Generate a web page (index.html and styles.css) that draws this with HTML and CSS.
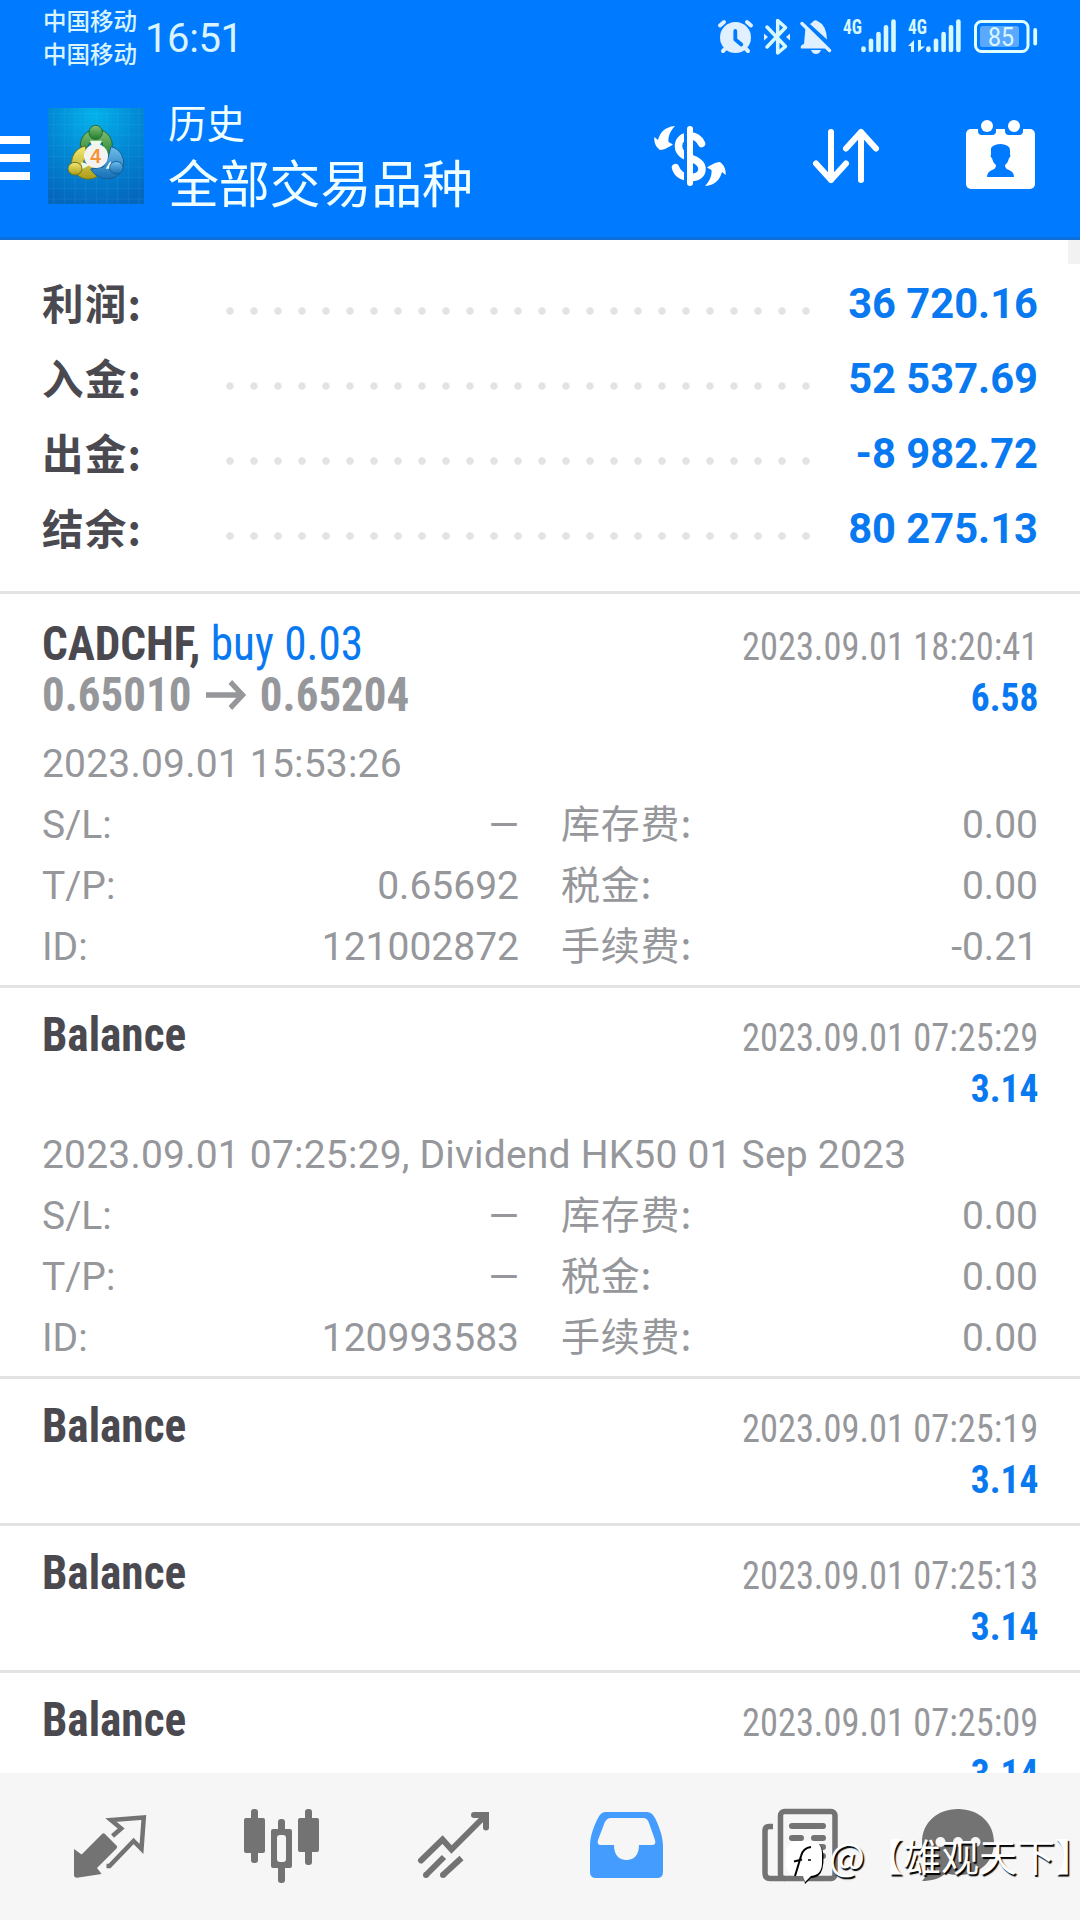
FILE: index.html
```html
<!DOCTYPE html>
<html lang="zh-CN">
<head>
<meta charset="utf-8">
<title>历史</title>
<link rel="stylesheet" href="styles.css">
</head>
<body>
<div class="screen">
  <header class="header">
    <div class="status">
      <div class="carriers"><span>中国移动</span><span>中国移动</span></div>
      <span class="clock">16:51</span>
      <svg class="status-icons" viewBox="710 0 330 72" width="330" height="72">
        <g fill="#e0f0ff" stroke="#e0f0ff" stroke-linecap="round" stroke-linejoin="round">
          <circle cx="735.5" cy="37.5" r="15.5" stroke="none"/>
          <path d="M720 25.5l4-3.5M747 22l4 3.500M723 51l2-2M748 51l-2-2" stroke-width="4" fill="none"/>
          <path d="M735.300 31v8.500l6 5" stroke="#007aff" stroke-width="3.800" fill="none"/>
          <path d="M767 27L785.500 46.500L777.700 53V20.500L785.500 27.500L767 47" stroke="#d8fafc" stroke-width="3.500" fill="none"/>
          <path d="M764 33.500l4 3.500l-4 3.500zM790 33.500l-4 3.500l4 3.500z" stroke="none"/>
          <path d="M805.500 27.500L826 48.500H801q-1.500-3 3-4.500zM810 24q2.500-1.500 3.500-3q2-1.500 4 0q9 4 9.500 18.500zM811 50h10q-1.500 4-5 4t-5-4z" stroke="none"/>
          <path d="M802 23.500L829.500 50.500" stroke-width="3.500"/>
        </g>
        <g stroke="#d8f8ff" stroke-width="4.600" stroke-linecap="round">
          <path d="M863.500 48.500v1.500M871 40.800V50M878.500 34V50M886 27.200V50M893.500 21.500V50"/>
          <path d="M928.400 48.500v1.500M936 40.800V50M943.600 34V50M951 27.200V50M958.400 21.500V50"/>
        </g>
        <g class="net"><text x="843" y="34" textLength="19" lengthAdjust="spacingAndGlyphs">4G</text><text x="908" y="34" textLength="19" lengthAdjust="spacingAndGlyphs">4G</text></g>
        <path d="M908 46L914 40V52H911V46zM918 40h3v6.500h4l-7 5.500z" fill="#d8f8ff"/>
        <rect x="975.500" y="21.500" width="52.500" height="30" rx="6" fill="none" stroke="#e0ffff" stroke-width="3"/>
        <rect x="980" y="26" width="39" height="21" rx="2.500" fill="#5ba8ff"/>
        <rect x="1033.300" y="28" width="3.800" height="17.500" rx="1.900" fill="#e0ffff"/>
        <text class="charge" x="988" y="46" textLength="26" lengthAdjust="spacingAndGlyphs">85</text>
      </svg>
    </div>
    <div class="toolbar">
      <div class="menu"><i></i><i></i><i></i></div>
      <svg class="logo" viewBox="24 24 288 288" width="96" height="96">
        <defs>
          <radialGradient id="sky" cx=".48" cy=".08" r=".95"><stop offset="0" stop-color="#04b2ea"/><stop offset=".5" stop-color="#0388d4"/><stop offset="1" stop-color="#0467bd"/></radialGradient>
          <linearGradient id="gr" x2="0" y2="1"><stop offset="0" stop-color="#86c078"/><stop offset="1" stop-color="#1e7f2a"/></linearGradient>
          <linearGradient id="ye" x2="0" y2="1"><stop offset="0" stop-color="#f4eb72"/><stop offset="1" stop-color="#ab9b18"/></linearGradient>
          <linearGradient id="bl" x2="0" y2="1"><stop offset="0" stop-color="#6fbdea"/><stop offset="1" stop-color="#146fb4"/></linearGradient>
        </defs>
        <path d="M24 24h288v288H24z" fill="url(#sky)"/>
        <path d="M41 24v288M73 24v288M105 24v288M137 24v288M169 24v288M201 24v288M233 24v288M265 24v288M297 24v288M24 41h288M24 73h288M24 105h288M24 137h288M24 169h288M24 201h288M24 233h288M24 265h288M24 297h288" stroke="#5cc4ff" stroke-opacity=".15" stroke-width="2.500"/>
        <g stroke-width="3">
          <path d="M121 140a48 48 0 1 1 86 25l-16 8l-4-44h-38l-8 14z" fill="url(#gr)" stroke="#1d6b39"/>
          <path d="M137 138a50 50 0 1 0 34 92l-18-40h-24l8-22z" fill="url(#ye)" stroke="#6f7420"/>
          <path d="M213 140a49 49 0 1 1-22 96q-26-6-39-29l38-6l14-28z" fill="url(#bl)" stroke="#175f9a"/>
          <path d="M150 122h36l-8 16h-22zM124 186l26 8l-24 14zM211 184l-14 22h22z" fill="#eefbe8"/>
          <ellipse cx="167" cy="97" rx="20" ry="21" fill="url(#gr)" stroke="#1d6b39"/>
          <ellipse cx="105" cy="206" rx="21" ry="19" fill="url(#ye)" stroke="#6f7420"/>
          <ellipse cx="229" cy="203" rx="20" ry="19" fill="url(#bl)" stroke="#175f9a"/>
        </g>
        <circle cx="168" cy="168" r="36" fill="#f4f3f1"/>
        <text class="four" x="167" y="190" text-anchor="middle">4</text>
      </svg>
      <div class="titles"><span class="title">历史</span><span class="subtitle">全部交易品种</span></div>
      <svg class="actions" viewBox="640 100 400 110" width="400" height="110" fill="none" stroke="#fff" stroke-linecap="round" stroke-linejoin="round">
        <path d="M701.500 143.500C699 138 695 136 690 136C683 136 678.500 140 678.500 146C678.500 153 684 156 690 158C698 160.500 702 164 702 169C702 175 697 177.500 690 177.500C682 177 677 173 675.500 167.500" stroke-width="7.500"/>
        <path d="M684 128h6v56h-6z" fill="#007aff" stroke="none"/>
        <path d="M690 129V183" stroke-width="6"/>
        <path id="swap" d="M675 126C664 127 660 133 658 140L654.300 137C654 143 656 147 660 150C664 150 669 147 673 144.500L668.500 142C668 137 670 131 675 126z" fill="#fff" stroke="none"/>
        <use href="#swap" transform="rotate(180 690 156)"/>
        <path d="M831 132V180M816 163.500L831 180L846 163.500M861 180V132M846 148.500L861 132L876 148.500" stroke-width="6"/>
        <g stroke="none"><rect x="966" y="129" width="69" height="60" rx="5" fill="#fff"/>
        <path d="M978 126h18v5q0 4-4 4h-10q-4 0-4-4zM1005 126h18v5q0 4-4 4h-10q-4 0-4-4z" fill="#007aff"/>
        <circle cx="987" cy="126" r="6" fill="#fff"/><circle cx="1014" cy="126" r="6" fill="#fff"/>
        <path d="M1001 144q9 1 9 6v4q1 3-1 4q-1 5-4 7q0 4 4 5q5 2 5 7h-27q0-5 5-7q4-1 4-5q-3-2-4-7q-2-1-1-4v-6q3-4 10-4z" fill="#007aff"/></g>
      </svg>
    </div>
  </header>

  <main class="content">
    <i class="thumb"></i>
    <section class="summary">
      <div class="sum"><span>利润:</span><i></i><b>36 720.16</b></div>
      <div class="sum"><span>入金:</span><i></i><b>52 537.69</b></div>
      <div class="sum"><span>出金:</span><i></i><b>-8 982.72</b></div>
      <div class="sum"><span>结余:</span><i></i><b>80 275.13</b></div>
    </section>

    <article class="deal first">
      <div class="line"><span class="symbol"><b>CADCHF,</b> <em>buy 0.03</em></span><span class="time">2023.09.01 18:20:41</span></div>
      <div class="line"><span class="price">0.65010<svg width="44" height="30" viewBox="0 0 44 30"><path d="M0 15H39M26 2L39 15L26 28" fill="none" stroke="#96979b" stroke-width="5.500"/></svg>0.65204</span><span class="profit">6.58</span></div>
      <div class="details">
        <p>2023.09.01 15:53:26</p>
        <div><span>S/L:</span><span>—</span></div><div><span class="cn">库存费:</span><span>0.00</span></div>
        <div><span>T/P:</span><span>0.65692</span></div><div><span class="cn">税金:</span><span>0.00</span></div>
        <div><span>ID:</span><span>121002872</span></div><div><span class="cn">手续费:</span><span>-0.21</span></div>
      </div>
    </article>

    <article class="deal">
      <div class="line"><span class="symbol"><b>Balance</b></span><span class="time">2023.09.01 07:25:29</span></div>
      <div class="line"><span class="price">&nbsp;</span><span class="profit">3.14</span></div>
      <div class="details">
        <p>2023.09.01 07:25:29, Dividend HK50 01 Sep 2023</p>
        <div><span>S/L:</span><span>—</span></div><div><span class="cn">库存费:</span><span>0.00</span></div>
        <div><span>T/P:</span><span>—</span></div><div><span class="cn">税金:</span><span>0.00</span></div>
        <div><span>ID:</span><span>120993583</span></div><div><span class="cn">手续费:</span><span>0.00</span></div>
      </div>
    </article>

    <article class="deal compact">
      <div class="line"><span class="symbol"><b>Balance</b></span><span class="time">2023.09.01 07:25:19</span></div>
      <div class="line"><span class="price">&nbsp;</span><span class="profit">3.14</span></div>
    </article>
    <article class="deal compact">
      <div class="line"><span class="symbol"><b>Balance</b></span><span class="time">2023.09.01 07:25:13</span></div>
      <div class="line"><span class="price">&nbsp;</span><span class="profit">3.14</span></div>
    </article>
    <article class="deal compact">
      <div class="line"><span class="symbol"><b>Balance</b></span><span class="time">2023.09.01 07:25:09</span></div>
      <div class="line"><span class="price">&nbsp;</span><span class="profit">3.14</span></div>
    </article>
  </main>

  <nav class="tabs">
    <svg viewBox="24 1773 172 147"><path d="M74 1849L81.600 1854.500L102 1834q1.500-1.500 3 0L116.500 1845.500q1.500 1.500 0 3L97 1868L101.600 1874L77 1877.800q-3 0-3-3z" fill="#737373"/><path d="M112.500 1836L121.200 1828.500L111 1820L143.800 1817.500L141.500 1849L133.600 1841L109.500 1866H106.500" fill="none" stroke="#737373" stroke-width="4.500"/></svg>
    <svg viewBox="196 1773 172 147"><g fill="#737373"><rect x="244" y="1818" width="21" height="35" rx="2"/><rect x="251" y="1809" width="7" height="54" rx="3"/><path fill-rule="evenodd" d="M273 1829h17q2 0 2 2v35q0 2-2 2h-17q-2 0-2-2v-35q0-2 2-2zM280 1835q-3 0-3 3v21q0 3 3 3h3q3 0 3-3v-21q0-3-3-3z"/><rect x="278" y="1819" width="7" height="13" rx="3"/><rect x="278" y="1865" width="7" height="18" rx="3"/><rect x="298" y="1818" width="21" height="34" rx="2"/><rect x="305" y="1809" width="7" height="56" rx="3"/></g></svg>
    <svg viewBox="368 1773 172 147"><path d="M421 1860.500L442.500 1839.500L451.500 1849.500L485 1816M474 1815H486V1827.500" fill="none" stroke="#737373" stroke-width="6" stroke-linecap="round"/><path d="M444 1857L426 1875M461.500 1858L443 1875" stroke="#737373" stroke-width="6"/><circle cx="426" cy="1875" r="3" fill="#737373"/><circle cx="443" cy="1875" r="3" fill="#737373"/></svg>
    <svg viewBox="540 1773 172 147"><path fill="#449cff" fill-rule="evenodd" d="M605 1812H647Q652 1812 655 1818C660 1828 663 1838 663 1846V1872Q663 1878 657 1878H596Q590 1878 590 1872V1846C590 1836 594 1826 598 1818Q601 1812 605 1812zM611 1818Q606.500 1818 604.500 1823L598 1840Q596.500 1845 601 1845H614C614 1855 619 1860 626.500 1860S639 1855 639 1845H652Q656.500 1845 655 1840L649 1823Q647.500 1818 643 1818z"/></svg>
    <svg viewBox="712 1773 172 147"><path d="M773 1826.500H769Q765 1826.500 765 1831V1873Q765 1878.500 770 1878.500H785" fill="none" stroke="#737373" stroke-width="5.500"/><rect x="780.500" y="1811.500" width="54.500" height="67" rx="4" fill="none" stroke="#737373" stroke-width="5.500"/><path d="M792 1826H823M792 1838H801M814 1838H823M792 1847H801M814 1847H823M792 1856H823" stroke="#737373" stroke-width="6" stroke-linecap="round"/></svg>
    <svg viewBox="884 1773 172 147"><path fill="#737373" d="M958 1809C979 1809 994 1823 994 1842C994 1862 980 1875 958 1875C953 1875 949 1874 946 1873C940 1879 931 1881 922 1881Q927 1876 929 1870C924 1863 922 1852 922 1842C922 1823 937 1809 958 1809z"/><g fill="#f6f6f6"><circle cx="940.500" cy="1842" r="5"/><circle cx="958" cy="1842" r="5"/><circle cx="975.500" cy="1842" r="5"/></g></svg>
  </nav>

  <div class="watermark">
    <svg viewBox="784 1836 45 48" width="45" height="48"><path d="M802 1843H813Q823 1843 823.500 1856Q824 1872 818 1876Q815 1878 811 1878L805 1884L804 1878Z" fill="#000"/><path d="M800 1841H810Q821.500 1841 822 1853V1863Q822 1875 811 1876L805 1882L803 1876H798Q786 1876 786 1864V1853Q786 1841 800 1841z" fill="#fff"/><path d="M811 1847Q803 1848 801 1856Q799 1863 795 1876M794 1861.500L802 1859.500" fill="none" stroke="#000" stroke-width="2"/><path d="M808 1860h3" stroke="#000" stroke-width="1.500"/></svg>
    <span>@【雄观天下】</span>
  </div>
</div>
</body>
</html>
```
FILE: styles.css
```css
* { box-sizing: border-box; }
body { margin: 0; }
i, em { font-style: normal; }
svg { display: block; }

.screen {
  position: relative;
  display: flex;
  flex-direction: column;
  width: 1080px;
  height: 1920px;
  overflow: hidden;
  background: #fff;
  color: #96979b;
  font: 39px/61px Roboto, "Noto Sans CJK SC", sans-serif;
}

/* Header */
.header {
  flex: none;
  height: 240px;
  background: #007aff;
  border-bottom: 3px solid #0b6ed9;
  color: #f0ffff;
}
.status {
  display: flex;
  align-items: flex-start;
  height: 72px;
  padding-left: 43px;
}
.carriers {
  display: flex;
  flex-direction: column;
  padding-top: 4px;
  font: 500 23.5px/33px "Noto Sans CJK SC", sans-serif;
  color: #d8f4ff;
}
.clock {
  padding: 8.5px 0 0 8px;
  font-size: 40px;
  line-height: 60px;
  letter-spacing: -.4px;
  color: #d8f4ff;
}
.status-icons { margin: 0 40px 0 auto; }
.net { font: 700 21px "Roboto Condensed", sans-serif; fill: #d8f8ff; }
.charge { font: 400 25px Roboto, sans-serif; fill: #d8f8ff; }

.toolbar { display: flex; align-items: flex-start; height: 165px; padding-right: 40px; }
.menu {
  display: flex;
  flex-direction: column;
  gap: 10px;
  width: 30px;
  padding-top: 64px;
}
.menu i { height: 8px; background: #fff; }
.logo { margin: 36px 0 0 18px; }
.four { font: 700 58px "Liberation Sans", sans-serif; fill: #f59338; }
.titles {
  display: flex;
  flex-direction: column;
  padding: 25px 0 0 24px;
  font-family: "Noto Sans CJK SC", sans-serif;
}
.title { font-size: 38.5px; line-height: 48px; }
.subtitle { font-size: 51px; line-height: 72px; letter-spacing: -.2px; }
.actions { margin: 28px 0 0 auto; }

/* Scrollable content */
.content { position: relative; flex: 1; min-height: 0; overflow: hidden; }
.thumb {
  position: absolute;
  top: 0;
  right: 0;
  width: 12px;
  height: 24px;
  background: #f2f2f2;
}
.summary { padding: 26px 42px 25px; }
.sum {
  display: grid;
  grid-template-columns: 176px 600px 1fr;
  align-items: baseline;
  height: 75px;
  font-size: 41.7px;
  line-height: 75px;
}
.sum span {
  padding-top: 6px;
  align-self: start;
  font: 700 41.5px/60px "Noto Sans CJK SC", sans-serif;
  letter-spacing: 1.2px;
  color: #4a4950;
}
.sum i {
  align-self: stretch;
  background: radial-gradient(circle at 12px 45px, #e3e3e3 3.300px, transparent 4.200px) 0 0 / 24px 75px repeat-x;
}
.sum b { color: #0879f0; text-align: right; }

.deal {
  height: 391px;
  padding: 21px 42px 0;
  border-top: 3px solid #e3e3e3;
}
.deal.first { height: 394px; padding-top: 24px; }
.deal.compact { height: 147px; }
.line {
  display: flex;
  justify-content: space-between;
  align-items: baseline;
  height: 51px;
  line-height: 51px;
  font-family: "Roboto Condensed", Roboto, sans-serif;
  white-space: nowrap;
}
.symbol, .price {
  font-size: 48px;
  transform: scaleX(.942);
  transform-origin: left;
}
.symbol b { color: #4a4950; }
.symbol em { color: #0879f0; }
.price { display: flex; align-items: center; font-weight: 700; transform: scaleX(.937); }
.price svg { margin: 0 14px 0 15px; }
.time, .profit {
  font-size: 39px;
  transform: scaleX(.934);
  transform-origin: right;
}
.profit { font-weight: 700; color: #0879f0; transform: scaleX(.96); }

.details {
  display: grid;
  grid-template-columns: 1fr 1fr;
  grid-template-rows: 61px 61px 61px 60px;
  column-gap: 42px;
  padding-top: 14px;
}
.details p { grid-column: 1 / -1; margin: 0; letter-spacing: .2px; }
.details div { display: flex; justify-content: space-between; align-items: baseline; height: 61px; }
.cn { font-family: "Noto Sans CJK SC", sans-serif; line-height: 48px; letter-spacing: .8px; }

/* Bottom navigation */
.tabs {
  display: flex;
  flex: none;
  height: 147px;
  padding: 0 24px;
  background: #f6f6f6;
}
.tabs svg { width: 172px; height: 147px; }

.watermark {
  position: absolute;
  left: 784px;
  top: 1836px;
  display: flex;
  color: #fff;
  font: 38px/38px "Noto Sans CJK SC", sans-serif;
  text-spacing-trim: space-all;
  text-shadow: 1.500px 1.500px 1px #000;
  white-space: nowrap;
}
```
